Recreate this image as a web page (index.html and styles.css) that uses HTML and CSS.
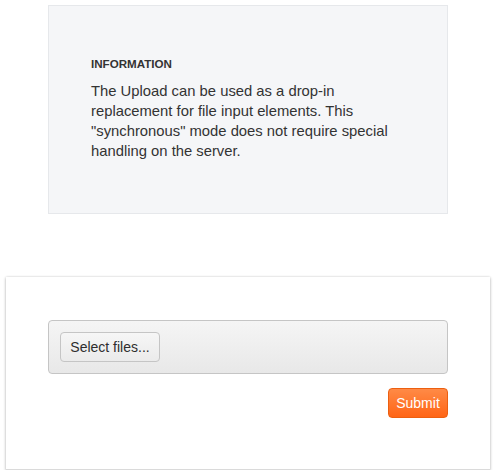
FILE: index.html
```html
<!DOCTYPE html>
<html>
<head>
<meta charset="utf-8">
<link rel="stylesheet" href="styles.css">
</head>
<body>
<div class="info">
  <h4 class="info-title">INFORMATION</h4>
  <p class="info-text">The Upload can be used as a drop-in replacement for file input elements. This "synchronous" mode does not require special handling on the server.</p>
</div>
<div class="card">
  <div class="dropzone">
    <button class="btn btn-select">Select files...</button>
  </div>
  <div class="actions">
    <button class="btn btn-primary">Submit</button>
  </div>
</div>
</body>
</html>
```
FILE: styles.css
```css
html, body {
  margin: 0;
  padding: 0;
  background: #fff;
  font-family: "Liberation Sans", Arial, sans-serif;
  color: #2e2e2e;
}
.info {
  box-sizing: border-box;
  width: 400px;
  margin: 5px 0 0 48px;
  height: 209px;
  padding: 50px 42px 0 42px;
  background: #f5f6f8;
  border: 1px solid #e6e8eb;
}
.info-title {
  margin: 0;
  font-size: 11.6px;
  line-height: 15px;
  font-weight: bold;
  color: #333;
}
.info-text {
  margin: 10px 0 0 0;
  font-size: 14.8px;
  line-height: 20px;
  color: #333;
}
.card {
  box-sizing: border-box;
  width: 484px;
  height: 193px;
  margin: 63px 0 0 6px;
  padding: 43px 42px 0 42px;
  background: #fff;
  border-bottom: 1px solid #dadada;
  box-shadow: 0 1px 3px rgba(0, 0, 0, 0.25), 0 0 2px rgba(0, 0, 0, 0.12);
}
.dropzone {
  box-sizing: border-box;
  height: 54px;
  padding: 11px;
  border: 1px solid #c5c5c5;
  border-radius: 4px;
  background: linear-gradient(#f5f5f5, #e8e8e8);
  display: flex;
}
.btn {
  box-sizing: border-box;
  height: 30px;
  font-family: "Liberation Sans", Arial, sans-serif;
  font-size: 14px;
  line-height: 28px;
  padding: 0;
  margin: 0;
  border-radius: 4px;
  cursor: pointer;
}
.btn-select {
  width: 100px;
  color: #2e2e2e;
  border: 1px solid #c5c5c5;
  background: linear-gradient(#f6f6f6, #ebebeb);
}
.actions {
  display: flex;
  justify-content: flex-end;
  margin-top: 14px;
}
.btn-primary {
  width: 60px;
  color: #fff;
  border: 1px solid #ec5f10;
  background: linear-gradient(#ff8a46, #ff6516);
}
```
